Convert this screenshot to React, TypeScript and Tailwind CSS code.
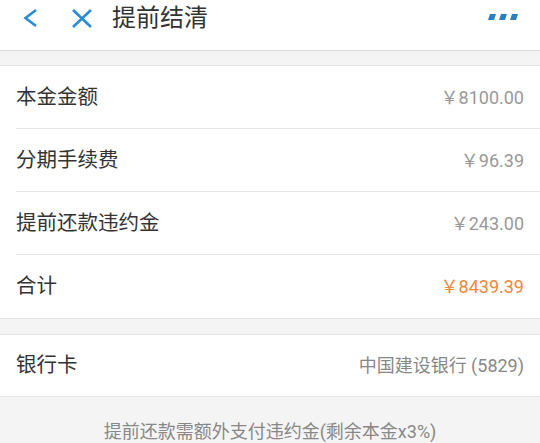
const font = { fontFamily: '"Roboto", "Noto Sans CJK SC", sans-serif' };

const rows = [
  { label: '本金金额', value: '￥8100.00' },
  { label: '分期手续费', value: '￥96.39' },
  { label: '提前还款违约金', value: '￥243.00' },
  { label: '合计', value: '￥8439.39', highlight: true },
];

function Row({ label, value, highlight, last }: { label: string; value: string; highlight?: boolean; last?: boolean }) {
  return (
    <div className="pl-4">
      <div className={`flex h-[63px] items-center justify-between pr-4 ${last ? 'h-[62px]' : 'border-b border-[#e6e6e6]'}`}>
        <span className="text-[20.5px] text-[#333]">{label}</span>
        <span className={`text-[18px] ${highlight ? 'text-[#f0883a]' : 'text-[#999]'}`}>{value}</span>
      </div>
    </div>
  );
}

export default function App() {
  return (
    <div className="h-[443px] w-[540px] overflow-hidden bg-[#f4f4f4]" style={font}>
      <div className="flex h-[51px] items-start border-b border-[#dcdcdc] bg-white pt-[5px]">
        <div className="flex h-[26px] items-center">
          <svg className="ml-[21px]" width="18" height="20" viewBox="0 0 18 20" fill="none">
            <path d="M15 2 L4.5 10 L15 18" stroke="#2a8bd6" strokeWidth="2.6" />
          </svg>
          <svg className="ml-[32px]" width="22" height="19" viewBox="0 0 22 19" fill="none">
            <path d="M2 1 L20 18 M20 1 L2 18" stroke="#2a8bd6" strokeWidth="2.6" />
          </svg>
          <span className="ml-[19px] text-[24px] leading-none text-[#333]">提前结清</span>
        </div>
        <svg className="ml-auto mr-[22px] mt-[9px]" width="30" height="7" viewBox="0 0 30 7">
          <polygon points="2,0 8,0 6,6 0,6" fill="#2a7fc2" />
          <polygon points="13,0 19,0 17,6 11,6" fill="#2a7fc2" />
          <polygon points="24,0 30,0 28,6 22,6" fill="#2a7fc2" />
        </svg>
      </div>
      <div className="mt-[14px] border-y border-[#e4e4e4] bg-white">
        {rows.map((r, i) => (
          <Row key={r.label} {...r} last={i === rows.length - 1} />
        ))}
      </div>
      <div className="mt-[15px] flex h-[63px] items-center justify-between border-y border-[#e4e4e4] bg-white px-4">
        <span className="text-[20.5px] text-[#333]">银行卡</span>
        <span className="text-[18px] text-[#888]">中国建设银行 (5829)</span>
      </div>
      <div className="pt-[21px] text-center text-[18px] text-[#888]">提前还款需额外支付违约金(剩余本金x3%)</div>
    </div>
  );
}
